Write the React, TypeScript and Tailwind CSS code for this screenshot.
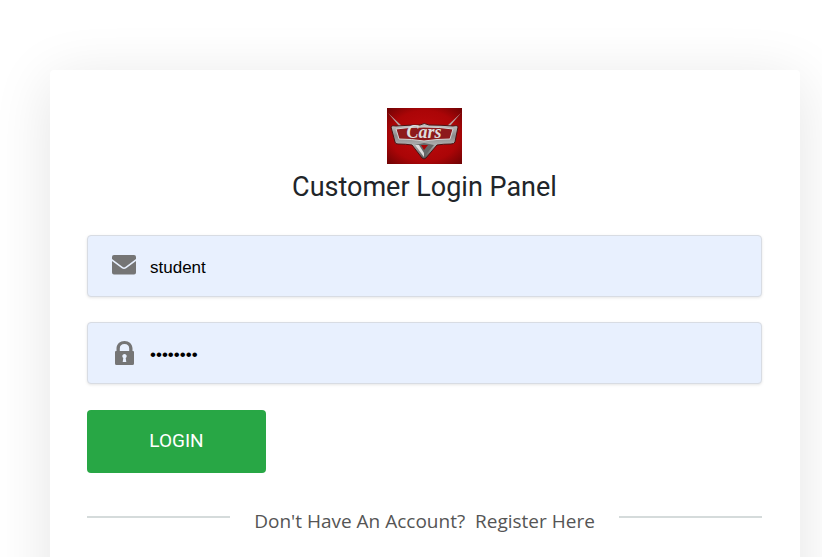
import type { ReactNode } from "react";

function CarsLogo() {
  return (
    <svg
      className="h-14 w-[75px]"
      viewBox="0 0 75 56"
      role="img"
      aria-label="Cars"
    >
      <defs>
        <radialGradient id="red" cx="50%" cy="50%" r="70%">
          <stop offset="0" stopColor="#c00a0c" />
          <stop offset="0.65" stopColor="#ab0507" />
          <stop offset="1" stopColor="#6e0304" />
        </radialGradient>
        <linearGradient id="chrome" x1="0" y1="0" x2="0" y2="1">
          <stop offset="0" stopColor="#c8c8c8" />
          <stop offset="0.35" stopColor="#8b8b8b" />
          <stop offset="0.6" stopColor="#adadad" />
          <stop offset="1" stopColor="#565656" />
        </linearGradient>
      </defs>
      <rect width="75" height="56" fill="url(#red)" />
      <path d="M1 5L12 18L15 18ZM74 5L63 18L60 18Z" fill="#b5a0a0" />
      <path
        d="M4 19Q5 17 9 18Q23 17 33 17Q37 14 42 17Q54 17 66 18Q71 17 71 19L68 34Q67 36 64 36Q56 36 50 37L39 50Q37 52 35 50L25 37Q19 36 11 36Q8 36 8 34Z"
        fill="url(#chrome)"
        stroke="#4a1212"
        strokeWidth="1"
      />
      <path
        d="M9 21Q22 19 37 19Q53 19 66 21L63 31Q50 31 37 33Q24 31 12 31Z"
        fill="#8d1a1c"
        stroke="#d5d5d5"
        strokeWidth="1"
      />
      <path d="M28 37L37 35L47 37L37 49Z" fill="#666" />
      <path d="M28 37L37 49L37 45L32 37Z" fill="#ddd" />
      <path d="M34 37H41L37 42Z" fill="#a80507" />
      <text
        x="37"
        y="30"
        textAnchor="middle"
        className="font-['Liberation_Serif',serif] text-[18px] font-bold italic"
        fill="#dedede"
      >
        Cars
      </text>
    </svg>
  );
}

function EnvelopeIcon() {
  return (
    <svg className="mb-0.5 h-5 w-6" viewBox="0 0 24 20" fill="#757575" aria-hidden="true">
      <path d="M2 0H22Q24 0 24 2V4L13.6 11.8Q12 13 10.4 11.8L0 4V2Q0 0 2 0Z" />
      <path d="M0 6L9.8 13.3Q12 14.8 14.2 13.3L24 6V17.5Q24 19.5 22 19.5H2Q0 19.5 0 17.5Z" />
    </svg>
  );
}

function LockIcon() {
  return (
    <svg className="h-6 w-[19px]" viewBox="0 0 19 24" fill="#757575" aria-hidden="true">
      <path
        fillRule="evenodd"
        d="M1.5 10V7.5C1.5 3 5 0 9.5 0S17.5 3 17.5 7.5V10H18Q19 10 19 11V22.5Q19 24 17.5 24H1.5Q0 24 0 22.5V11Q0 10 1 10ZM4.8 10H14.2V7.5C14.2 4.7 12.5 3 9.5 3S4.8 4.7 4.8 7.5ZM9.5 13C8.2 13 7.3 14 7.3 15.2C7.3 16 7.7 16.7 8.3 17.1L7.7 21H11.3L10.7 17.1C11.3 16.7 11.7 16 11.7 15.2C11.7 14 10.8 13 9.5 13Z"
      />
    </svg>
  );
}

type FieldProps = {
  id: string;
  label: string;
  type: string;
  value: string;
  icon: ReactNode;
};

function Field({ id, label, type, value, icon }: FieldProps) {
  return (
    <div className="relative">
      <input
        id={id}
        type={type}
        defaultValue={value}
        aria-label={label}
        className="block h-[62px] w-full rounded border border-[#d8dce3] bg-[#e8f0fe] pr-4 pl-[62px] pt-1 font-['Liberation_Sans',Arial,sans-serif] text-[17px] text-black shadow-[0_1px_3px_rgba(0,0,0,0.1)] outline-none"
      />
      <label
        htmlFor={id}
        className="absolute inset-y-0 left-[25px] flex w-6 items-center justify-center"
      >
        {icon}
      </label>
    </div>
  );
}

export default function App() {
  return (
    <div className="flex min-h-screen flex-col overflow-hidden bg-white pt-[70px] pr-[22px] pl-[50px]">
      <main className="flex-1 rounded bg-white pt-[38px] pr-[38px] pb-20 pl-[37px] shadow-[0_10px_60px_rgba(0,0,0,0.11)]">
        <header className="flex flex-col items-center">
          <CarsLogo />
          <h1 className="mt-1 font-['Roboto',sans-serif] text-[27px] leading-[38px] text-[#212529]">
            Customer Login Panel
          </h1>
        </header>
        <form className="mt-[29px]" onSubmit={(e) => e.preventDefault()}>
          <div className="flex flex-col gap-[25px]">
            <Field id="user" label="Username" type="text" value="student" icon={<EnvelopeIcon />} />
            <Field id="password" label="Password" type="password" value="password" icon={<LockIcon />} />
          </div>
          <button
            type="submit"
            className="mt-[26px] block h-[63px] w-[179px] rounded bg-[#28a745] font-['Roboto',sans-serif] text-[19px] text-white"
          >
            LOGIN
          </button>
        </form>
        <div className="mt-8 flex items-center gap-6">
          <span className="mb-2 h-0.5 flex-1 bg-[#d5dbdb]" />
          <p className="font-['Open_Sans',sans-serif] text-[19px] leading-8 text-[#555]">
            Don't Have An Account?&nbsp;{" "}
            <a href="#register">Register Here</a>
          </p>
          <span className="mb-2 h-0.5 flex-1 bg-[#d5dbdb]" />
        </div>
      </main>
    </div>
  );
}
